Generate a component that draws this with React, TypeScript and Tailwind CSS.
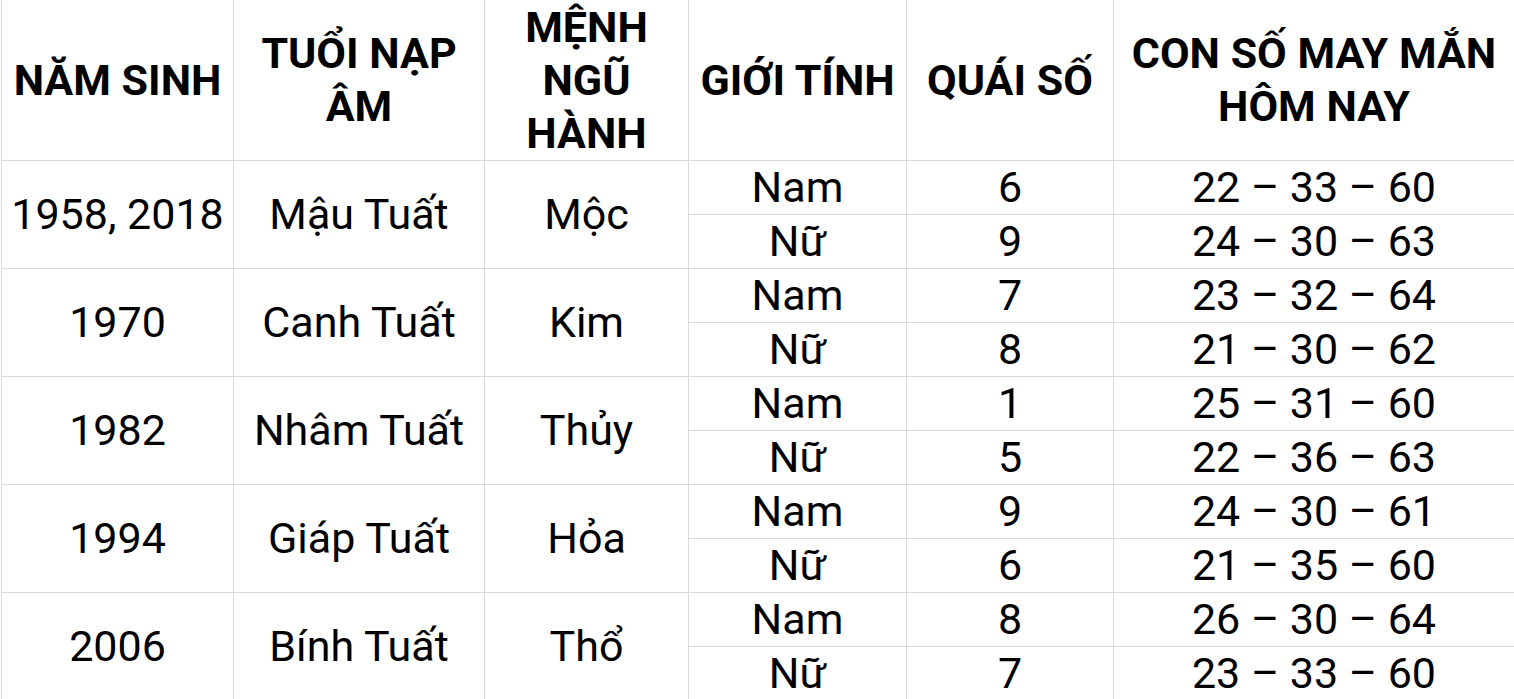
import React from "react";

type Group = {
  year: string;
  tuoi: string;
  menh: string;
  rows: [string, string, string][];
};

const groups: Group[] = [
  {
    year: "1958, 2018",
    tuoi: "Mậu Tuất",
    menh: "Mộc",
    rows: [
      ["Nam", "6", "22 – 33 – 60"],
      ["Nữ", "9", "24 – 30 – 63"],
    ],
  },
  {
    year: "1970",
    tuoi: "Canh Tuất",
    menh: "Kim",
    rows: [
      ["Nam", "7", "23 – 32 – 64"],
      ["Nữ", "8", "21 – 30 – 62"],
    ],
  },
  {
    year: "1982",
    tuoi: "Nhâm Tuất",
    menh: "Thủy",
    rows: [
      ["Nam", "1", "25 – 31 – 60"],
      ["Nữ", "5", "22 – 36 – 63"],
    ],
  },
  {
    year: "1994",
    tuoi: "Giáp Tuất",
    menh: "Hỏa",
    rows: [
      ["Nam", "9", "24 – 30 – 61"],
      ["Nữ", "6", "21 – 35 – 60"],
    ],
  },
  {
    year: "2006",
    tuoi: "Bính Tuất",
    menh: "Thổ",
    rows: [
      ["Nam", "8", "26 – 30 – 64"],
      ["Nữ", "7", "23 – 33 – 60"],
    ],
  },
];

const cell = "flex items-center justify-center text-center border-b border-r border-[#dadada]";

export default function App() {
  return (
    <div
      className="w-[1514px] h-[699px] overflow-hidden bg-white text-black pl-[1px]"
      style={{ fontFamily: "Roboto, 'Noto Sans', sans-serif" }}
    >
      <div className="grid grid-cols-[233px_251px_204px_218px_207px_420px] grid-rows-[161px_repeat(10,54px)] text-[43px]">
        {/* header */}
        <div className={`${cell} border-l font-bold leading-[53px]`}>NĂM SINH</div>
        <div className={`${cell} font-bold leading-[53px]`}>
          TUỔI NẠP
          <br />
          ÂM
        </div>
        <div className={`${cell} font-bold leading-[53px]`}>
          MỆNH
          <br />
          NGŨ
          <br />
          HÀNH
        </div>
        <div className={`${cell} font-bold leading-[53px]`}>GIỚI TÍNH</div>
        <div className={`${cell} font-bold leading-[53px]`}>QUÁI SỐ</div>
        <div className={`${cell} border-r-0 font-bold leading-[53px] pr-[20px]`}>
          CON SỐ MAY MẮN
          <br />
          HÔM NAY
        </div>

        {groups.map((g) => (
          <React.Fragment key={g.year}>
            <div className={`${cell} border-l row-span-2 leading-none`}>{g.year}</div>
            <div className={`${cell} row-span-2 leading-none`}>{g.tuoi}</div>
            <div className={`${cell} row-span-2 leading-none`}>{g.menh}</div>
            {g.rows.map((r, i) => (
              <React.Fragment key={i}>
                <div
                  className={`${cell} leading-none ${i === 0 ? "col-start-4" : "col-start-4"}`}
                >
                  {r[0]}
                </div>
                <div className={`${cell} leading-none`}>{r[1]}</div>
                <div className={`${cell} border-r-0 leading-none pr-[20px]`}>{r[2]}</div>
              </React.Fragment>
            ))}
          </React.Fragment>
        ))}
      </div>
    </div>
  );
}
